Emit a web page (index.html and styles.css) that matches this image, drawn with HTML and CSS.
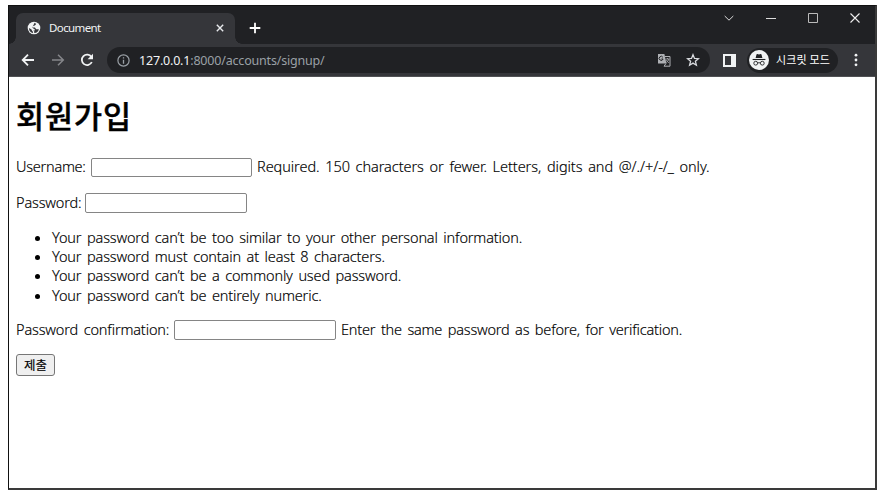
FILE: index.html
```html
<!DOCTYPE html>
<html lang="ko">
<head>
<meta charset="utf-8">
<title>Document</title>
<link rel="stylesheet" href="styles.css">
</head>
<body>
<div class="window">
  <header class="tabstrip">
    <div class="tab">
      <svg class="globe" width="14" height="14" viewBox="0 0 14 14"><circle cx="7" cy="7" r="6.3" fill="#f1f3f4"/><path d="M7.600 1.800l1.600 1.100-1.400 1.700-2.200.6-.1 1.300h2.400l1.300 1.700 2.700.1-.8 1.900-1.900 1.600-2 .3.100-1.500-1-1.100h1.500L7.700 8.300l-1.400-.7-1.200-1.300L6.400 4.300z" fill="#35363a"/><path d="M2 7.100l2.500 1.300.7 1.600.8.700-.2 1.500-2.200-1.100-1.300-1.800z" fill="#35363a"/></svg>
      <span class="tab-title">Document</span>
      <svg class="tab-close" width="8" height="8" viewBox="0 0 8 8"><path d="M.8.8l6.4 6.4M7.2.8L.8 7.2" stroke="#e8eaed" stroke-width="1.4"/></svg>
    </div>
    <svg class="new-tab" width="12" height="12" viewBox="0 0 12 12"><path d="M6 .7v10.6M.7 6h10.6" stroke="#fff" stroke-width="1.8"/></svg>
    <div class="controls">
      <svg width="10" height="10" viewBox="0 0 10 10"><path d="M.7 3L5 7.2 9.3 3" fill="none" stroke="#ddd" stroke-width="1"/></svg>
      <svg width="10" height="10" viewBox="0 0 10 10"><path d="M0 5.5h10" stroke="#ddd"/></svg>
      <svg width="10" height="10" viewBox="0 0 10 10"><path d="M.5.5h9v9h-9z" fill="none" stroke="#bbb"/></svg>
      <svg width="10" height="10" viewBox="0 0 10 10"><path d="M.5.5l9 9M9.5.5l-9 9" stroke="#eee" stroke-width="1.1"/></svg>
    </div>
  </header>
  <nav class="toolbar">
    <svg class="back" width="14" height="14" viewBox="0 0 14 14"><path d="M13 7H2M7 1.7L1.7 7 7 12.3" fill="none" stroke="#f1f3f4" stroke-width="1.8"/></svg>
    <svg class="forward" width="14" height="14" viewBox="0 0 14 14"><path d="M1 7h11M7 1.7L12.3 7 7 12.3" fill="none" stroke="#85868a" stroke-width="1.5"/></svg>
    <svg class="reload" width="14" height="14" viewBox="0 0 14 14"><path d="M11.8 9A5.2 5.2 0 1 1 11.4 4" fill="none" stroke="#f1f3f4" stroke-width="1.8"/><path d="M13 .8v5.4H7.6z" fill="#f1f3f4"/></svg>
    <div class="address">
      <svg width="13" height="13" viewBox="0 0 13 13"><circle cx="6.5" cy="6.5" r="5.6" fill="none" stroke="#9aa0a6" stroke-width="1.2"/><path d="M6.5 5.7v4M6.5 3.2v1.4" stroke="#9aa0a6" stroke-width="1.3"/></svg>
      <span class="url"><b>127.0.0.1</b>:8000/accounts/signup/</span>
      <svg class="translate" width="14" height="14" viewBox="0 0 14 14"><path d="M1 1h6.4l2 9.5H1z" fill="#aeb0b4"/><path d="M8 3.5h5v9.7H7l2-2.7" fill="none" stroke="#aeb0b4"/><path d="M5.9 4.3A2 2 0 1 0 6.1 6H4.4" fill="none" stroke="#202124" stroke-width="1"/><path d="M8.7 6h3.6M10.5 5v1M11.8 6c-.2 1.4-1.2 2.7-2.5 3.4M9.4 7c.4 1.1 1.4 2.2 2.5 2.8" fill="none" stroke="#aeb0b4" stroke-width=".8"/></svg>
      <svg class="star" width="14" height="14" viewBox="0 0 14 14"><path d="M7 1.7l1.5 3.7 4 .3-3.1 2.6 1 3.9L7 10.1l-3.4 2.1 1-3.9-3.1-2.6 4-.3z" fill="none" stroke="#dadce0" stroke-width="1.3"/></svg>
    </div>
    <svg class="panel" width="13" height="13" viewBox="0 0 13 13"><path d="M0 0h13v13H0zM2 2v9h6V2z" fill="#f1f3f4" fill-rule="evenodd"/></svg>
    <div class="incognito">
      <svg width="20" height="20" viewBox="0 0 20 20"><circle cx="10" cy="10" r="10" fill="#f1f3f4"/><path d="M6.6 8l.9-3.5q.2-.6.8-.4L10 4.5l1.7-.4q.6-.2.8.4l.9 3.5z" fill="#202124"/><path d="M3.6 9.5h12.8" stroke="#202124" stroke-width="1.1"/><g fill="none" stroke="#202124" stroke-width=".9"><circle cx="6.7" cy="13.2" r="1.9"/><circle cx="13.3" cy="13.2" r="1.9"/><path d="M8.6 13q1.4-.6 2.8 0"/></g></svg>
      <span>시크릿 모드</span>
    </div>
    <svg class="more" width="4" height="14" viewBox="0 0 4 14"><g fill="#f1f3f4"><circle cx="2" cy="2.2" r="1.4"/><circle cx="2" cy="7" r="1.4"/><circle cx="2" cy="11.8" r="1.4"/></g></svg>
  </nav>
  <main class="page">
    <h1>회원가입</h1>
    <form>
      <div class="row"><label class="l-user" for="u">Username:</label><input id="u" type="text"><span class="help h-user">Required. 150 characters or fewer. Letters, digits and @/./+/-/_ only.</span></div>
      <div class="row"><label class="l-pass" for="p">Password:</label><input id="p" type="password"></div>
      <ul>
        <li>Your password can’t be too similar to your other personal information.</li>
        <li>Your password must contain at least 8 characters.</li>
        <li>Your password can’t be a commonly used password.</li>
        <li>Your password can’t be entirely numeric.</li>
      </ul>
      <div class="row"><label class="l-conf" for="c">Password confirmation:</label><input id="c" type="password"><span class="help h-conf">Enter the same password as before, for verification.</span></div>
      <button type="button">제출</button>
    </form>
  </main>
</div>
</body>
</html>
```
FILE: styles.css
```css
* { box-sizing: border-box; }
body { margin: 0; background: #fff; font-family: "Noto Sans", "Noto Sans CJK KR", sans-serif; }
svg { display: block; flex: none; }
.window { width: 869px; height: 485px; margin: 5px 0 0 8px; border: 1px solid #111; border-right: 2px solid #3a3a3a; border-bottom: 2px solid #3a3a3a; overflow: hidden; }

.tabstrip { height: 38px; background: #202124; display: flex; align-items: flex-end; }
.tab { position: relative; width: 219px; height: 31px; margin-left: 7px; padding: 0 11px 2px 11px; background: #35363a; border-radius: 7px 7px 0 0; display: flex; align-items: center; }
.tab::before, .tab::after { content: ""; position: absolute; bottom: 0; width: 7px; height: 7px; }
.tab::before { left: -7px; background: radial-gradient(circle at 0 0, #202124 6.5px, #35363a 7px); }
.tab::after { right: -7px; background: radial-gradient(circle at 100% 0, #202124 6.5px, #35363a 7px); }
.tab-title { margin-left: 8px; font-size: 11.5px; letter-spacing: -.6px; color: #f1f3f4; }
.tab-close { margin-left: auto; }
.new-tab { margin: 0 0 10px 14px; }
.controls { margin: 0 15px 21px auto; display: flex; gap: 32px; }

.toolbar { height: 33px; background: #35363a; border-bottom: 1px solid #505154; display: flex; align-items: center; }
.back { margin-left: 12px; }
.forward { margin-left: 16px; }
.reload { margin-left: 15px; }
.address { width: 603px; height: 26px; margin-left: 13px; padding: 0 10px; border-radius: 13px; background: #202124; display: flex; align-items: center; }
.url { margin-left: 9px; font-size: 12.5px; letter-spacing: -.19px; color: #9aa0a6; white-space: nowrap; }
.url b { color: #f1f3f4; font-weight: 400; }
.translate { margin-left: auto; }
.star { margin-left: 15px; }
.panel { margin-left: 13px; }
.incognito { width: 91px; height: 25px; margin-left: 11px; padding-left: 2px; border-radius: 13px; background: #202124; display: flex; align-items: center; gap: 7px; font-size: 11px; color: #fff; white-space: nowrap; }
.incognito span { letter-spacing: .1px; padding-bottom: 2px; }
.more { margin-left: 16px; }

.page { padding: 0 7px; color: #000; font-size: 14.5px; font-weight: 300; letter-spacing: -.15px; word-spacing: 2px; -webkit-text-stroke: .15px #000; }
h1 { margin: 16px 0 20px; font: 500 30.5px/44px "Noto Sans CJK KR", sans-serif; letter-spacing: .9px; -webkit-text-stroke: .4px #000; }
.row { height: 20px; display: flex; align-items: center; line-height: 20px; white-space: nowrap; }
.row label, .help { padding-bottom: 2px; }
.row + .row { margin-top: 16px; }
.row label { flex: none; }
.l-user { width: 75px; letter-spacing: -.25px; }
.l-pass { width: 69px; }
.l-conf { width: 158px; }
input { flex: none; width: 162px; height: 20px; margin: 0; border: 1px solid #858585; border-radius: 2px; background: #fff; }
#u { width: 161px; height: 19px; margin-top: 1px; }
.help { margin-left: 5px; }
.h-user { letter-spacing: -.06px; }
.h-conf { letter-spacing: -.2px; }
ul { margin: 15px 0 15px; padding-left: 36px; line-height: 19.2px; white-space: nowrap; }
button { display: block; width: 39px; height: 22px; margin-top: 14px; padding: 0; border: 1px solid #767676; border-radius: 3px; background: #efefef; color: #000; font: 12.5px/18px "Noto Sans CJK KR", sans-serif; letter-spacing: 0; }
```
